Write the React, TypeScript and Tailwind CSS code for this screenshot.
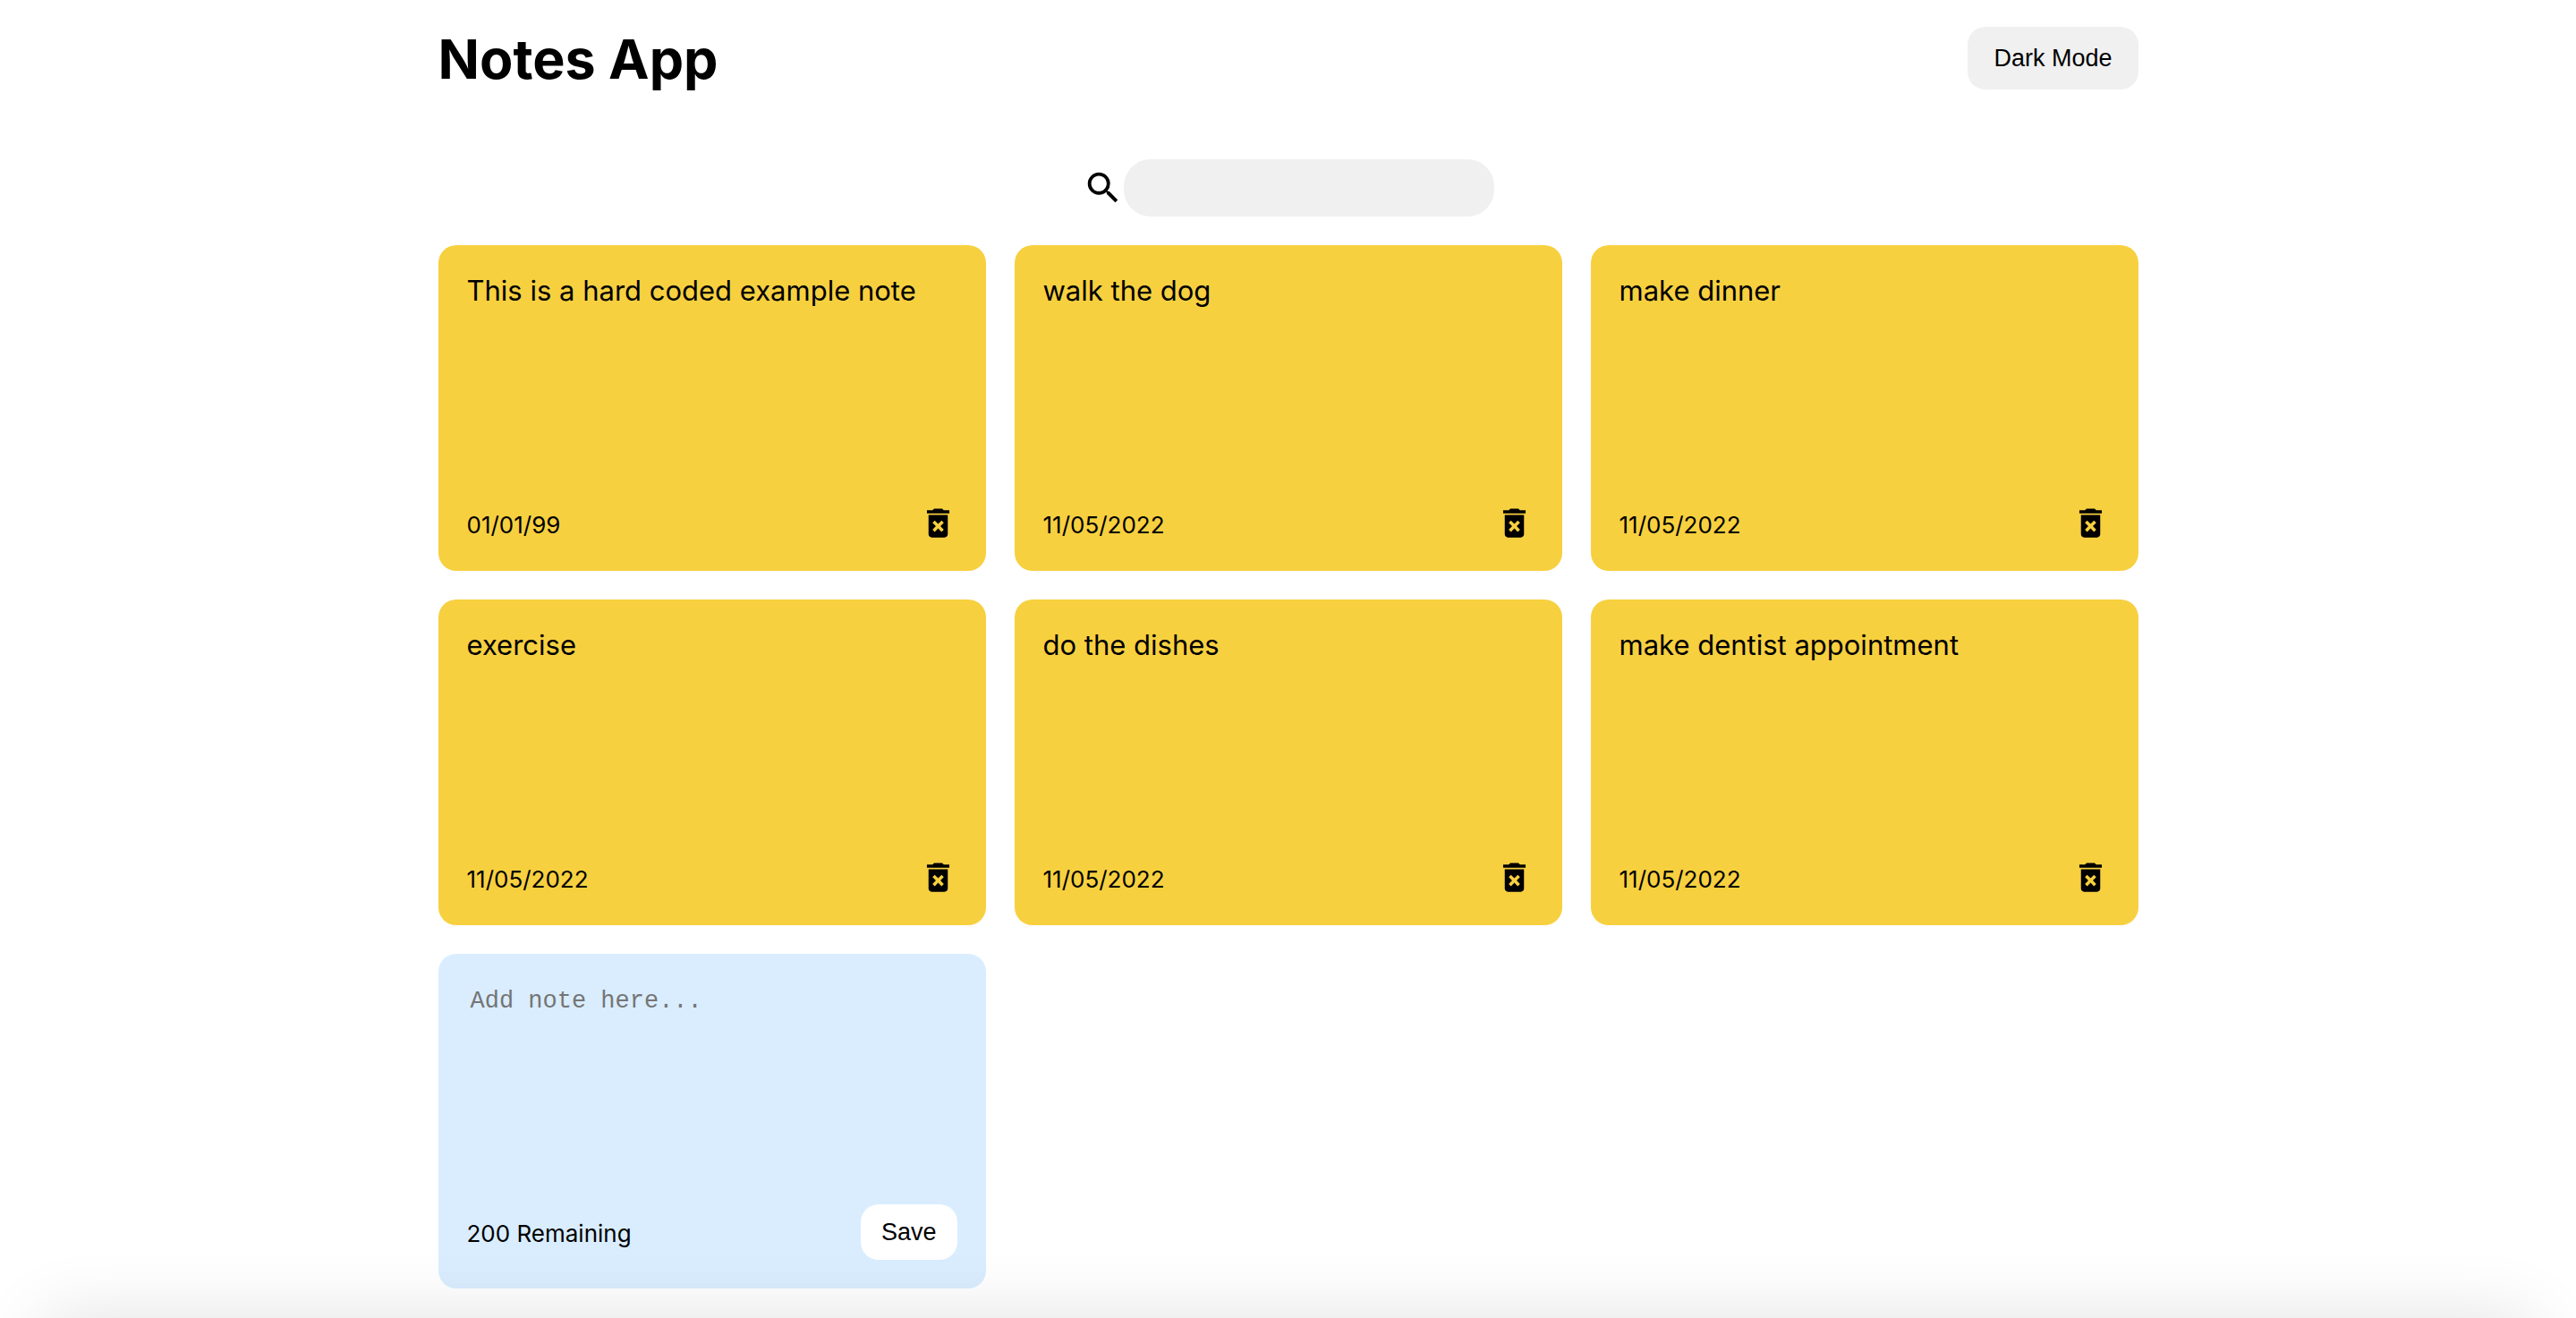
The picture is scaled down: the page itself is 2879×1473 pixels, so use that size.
import { useState } from "react";
import { MdDeleteForever, MdSearch } from "react-icons/md";

type Note = { id: number; text: string; date: string };

const LIMIT = 200;

const initialNotes: Note[] = [
  { id: 1, text: "This is a hard coded example note", date: "01/01/99" },
  { id: 2, text: "walk the dog", date: "11/05/2022" },
  { id: 3, text: "make dinner", date: "11/05/2022" },
  { id: 4, text: "exercise", date: "11/05/2022" },
  { id: 5, text: "do the dishes", date: "11/05/2022" },
  { id: 6, text: "make dentist appointment", date: "11/05/2022" },
];

function Header({ onToggle }: { onToggle: () => void }) {
  return (
    <header className="flex items-start justify-between pt-7">
      <h1 className="text-[61px] leading-[76px] font-bold">Notes App</h1>
      <button
        type="button"
        onClick={onToggle}
        className="mt-0.5 rounded-[20px] bg-[#f0f0f0] px-[29px] py-5 font-['Liberation_Sans',Arial,sans-serif] text-[27px] leading-[30px] text-black"
      >
        Dark Mode
      </button>
    </header>
  );
}

function Search({ value, onChange }: { value: string; onChange: (v: string) => void }) {
  return (
    <label className="mt-[74px] flex items-center justify-center">
      <MdSearch className="size-[46px]" aria-hidden="true" />
      <input
        type="text"
        aria-label="Search notes"
        value={value}
        onChange={(e) => onChange(e.target.value)}
        className="h-16 w-[414px] rounded-[30px] bg-[#f0f0f0] px-5 text-[27px] text-black outline-none"
      />
    </label>
  );
}

function NoteCard({ note, onDelete }: { note: Note; onDelete: () => void }) {
  return (
    <article className="flex min-h-[364px] flex-col justify-between rounded-[20px] bg-[#f7d040] p-8 text-black">
      <p className="text-[31px] leading-[38px]">{note.text}</p>
      <footer className="flex items-center justify-between">
        <small className="pt-1 text-[26px] leading-8">{note.date}</small>
        <button type="button" aria-label="Delete note" onClick={onDelete}>
          <MdDeleteForever className="size-[43px]" aria-hidden="true" />
        </button>
      </footer>
    </article>
  );
}

function NewNote({ onSave }: { onSave: (text: string) => void }) {
  const [text, setText] = useState("");
  const save = () => {
    if (text.trim()) {
      onSave(text);
      setText("");
    }
  };
  return (
    <form
      onSubmit={(e) => {
        e.preventDefault();
        save();
      }}
      className="flex min-h-[374px] flex-col justify-between rounded-[20px] bg-[#d9edff] p-8 text-black"
    >
      <textarea
        aria-label="New note"
        placeholder="Add note here..."
        maxLength={LIMIT}
        rows={7}
        value={text}
        onChange={(e) => setText(e.target.value)}
        className="resize-none bg-transparent px-1 pt-1.5 font-['Liberation_Mono','Courier_New',monospace] text-[27px] leading-[30px] outline-none placeholder:text-[#757575]"
      />
      <footer className="flex items-center justify-between">
        <small className="pt-1 text-[26px] leading-8">{LIMIT - text.length} Remaining</small>
        <button
          type="submit"
          className="rounded-[20px] bg-white px-[23px] py-4 font-['Liberation_Sans',Arial,sans-serif] text-[27px] leading-[30px]"
        >
          Save
        </button>
      </footer>
    </form>
  );
}

export default function App() {
  const [dark, setDark] = useState(false);
  const [query, setQuery] = useState("");
  const [notes, setNotes] = useState(initialNotes);
  const shown = notes.filter((n) => n.text.toLowerCase().includes(query.toLowerCase()));

  return (
    <div
      className={
        dark
          ? "min-h-screen bg-black font-[Inter,sans-serif] text-white"
          : "min-h-screen bg-white font-[Inter,sans-serif] text-black"
      }
    >
      <div className="mx-auto max-w-[1900px]">
        <Header onToggle={() => setDark(!dark)} />
        <Search value={query} onChange={setQuery} />
        <main className="mt-8 grid grid-cols-3 items-start gap-8">
          {shown.map((n) => (
            <NoteCard
              key={n.id}
              note={n}
              onDelete={() => setNotes(notes.filter((m) => m.id !== n.id))}
            />
          ))}
          <NewNote
            onSave={(text) =>
              setNotes([...notes, { id: Date.now(), text, date: new Date().toLocaleDateString("en-GB") }])
            }
          />
        </main>
      </div>
      <div className="pointer-events-none fixed inset-x-12 top-full h-40 shadow-[0_0_80px_rgba(0,0,0,0.12)]" />
    </div>
  );
}
